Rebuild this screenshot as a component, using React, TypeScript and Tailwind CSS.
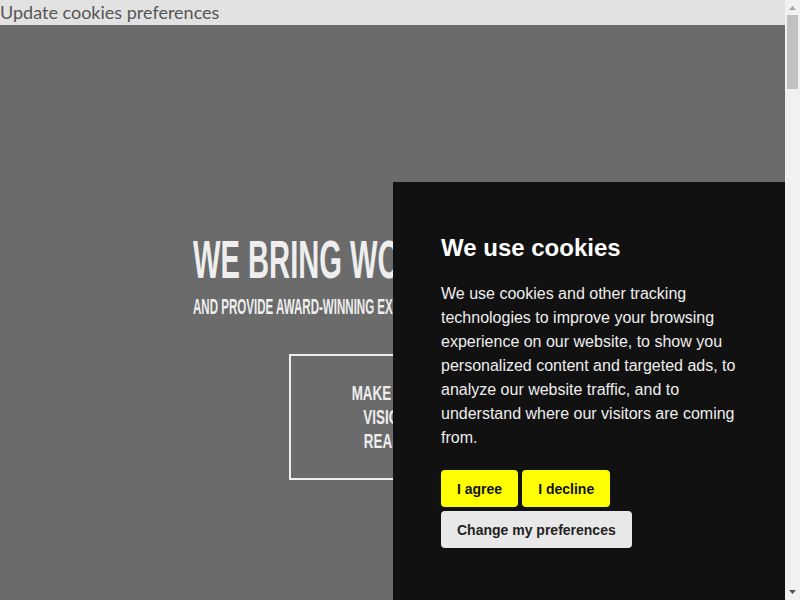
import React from "react";

const narrow = { fontFamily: '"Liberation Sans Narrow", "Liberation Sans", sans-serif' };

const CookiePanel: React.FC = () => {
  return (
    <div
      className="fixed right-[15px] bottom-0 w-[392px] h-[418px] bg-[#111111] px-12 pt-[50px]"
      style={{ fontFamily: '"Liberation Sans", Arial, sans-serif' }}
    >
      <h2 className="text-[24px] font-bold leading-[32px] text-white mb-[18px]">We use cookies</h2>
      <p className="text-[16px] leading-[24px] text-[#eeeeee]">
        We use cookies and other tracking technologies to improve your browsing experience on our
        website, to show you personalized content and targeted ads, to analyze our website traffic,
        and to understand where our visitors are coming from.
      </p>
      <div className="flex flex-wrap gap-1 mt-[20px] w-[200px]">
        <button className="h-[37px] px-4 bg-[#ffff00] text-[#111] text-sm font-bold rounded-sm">
          I agree
        </button>
        <button className="h-[37px] px-4 bg-[#ffff00] text-[#111] text-sm font-bold rounded-sm">
          I decline
        </button>
        <button className="h-[37px] px-4 bg-[#e8e8e8] text-[#222] text-sm font-bold rounded-sm whitespace-nowrap">
          Change my preferences
        </button>
      </div>
    </div>
  );
};

// page scrollbar, drawn since the headless browser hides it
const Scrollbar: React.FC = () => (
  <div className="fixed right-0 top-0 h-screen w-[15px] bg-[#f1f1f1] flex flex-col items-center">
    <svg width="15" height="15" viewBox="0 0 15 15" className="shrink-0">
      <path d="M4 10 L7.5 6 L11 10 Z" fill="#a3a3a3" />
    </svg>
    <div className="w-[11px] h-[74px] bg-[#c1c1c1]" />
    <div className="flex-1" />
    <svg width="15" height="15" viewBox="0 0 15 15" className="shrink-0">
      <path d="M4 5 L11 5 L7.5 9 Z" fill="#505050" />
    </svg>
  </div>
);

export default function App() {
  return (
    <div className="min-h-screen mr-[15px]">
      <div className="h-[25px] bg-[#e2e2e2]">
        <button
          className="text-[18px] leading-[25px] text-[#555555]"
          style={{ fontFamily: "Lato, sans-serif" }}
        >
          Update cookies preferences
        </button>
      </div>

      <section className="bg-[#6b6b6b] h-[4575px] pt-[208px]">
        <div className="w-[400px] mx-auto text-[#eeeeee]" style={narrow}>
          <h1 className="text-[53px] leading-none font-bold whitespace-nowrap inline-block origin-left scale-x-[0.55]">
            WE BRING WORDS TO LIFE
          </h1>
          <p className="mt-[10px] text-[22px] leading-none font-bold whitespace-nowrap origin-left scale-x-[0.525]">
            AND PROVIDE AWARD-WINNING EXPERIENCES
          </p>
        </div>
        <div
          className="mt-9 mx-auto w-[207px] border-2 border-[#eeeeee] py-[25px] text-center text-[#eeeeee]"
          style={narrow}
        >
          <div className="text-[20px] leading-[24px] font-bold scale-x-[0.67]">
            <div>MAKE YOUR</div>
            <div>VISION A</div>
            <div>REALITY</div>
          </div>
        </div>
      </section>

      <CookiePanel />
      <Scrollbar />
    </div>
  );
}
